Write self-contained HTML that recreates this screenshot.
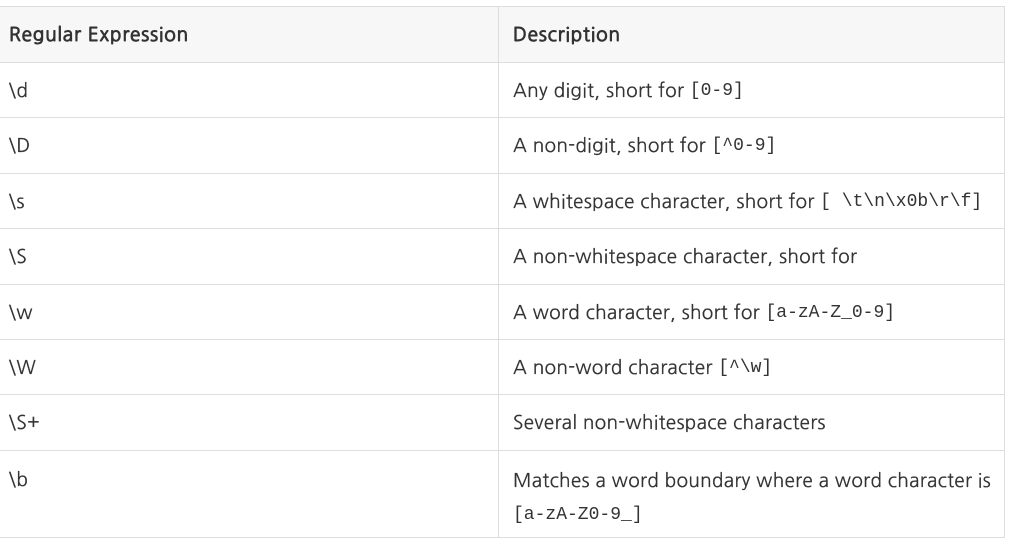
<!DOCTYPE html>
<html><head><meta charset="utf-8"><style>
body{margin:0;background:#fff;width:1010px;height:539px;overflow:hidden;font-family:"NanumGothic","Liberation Sans",sans-serif;color:#333;font-size:19px}
.r{position:absolute;left:0;width:1005px;border-top:1px solid #ddd;}
.c{position:absolute;top:0;bottom:0;display:flex;align-items:center;padding-left:9px;box-sizing:border-box;white-space:pre;-webkit-text-stroke:0.25px #333;letter-spacing:0.3px}
.a{left:0;width:499px;border-right:1px solid #ddd}
.b{left:500px;right:0;padding-left:13px;border-right:1px solid #ddd}
code{font-family:"Liberation Mono","DejaVu Sans Mono",monospace;font-size:18px;-webkit-text-stroke:0;letter-spacing:0}
.h{background:#f7f7f7}
.h .c{-webkit-text-stroke:0.9px #333;letter-spacing:0.8px}
</style></head><body>
<div class="r h" style="top:6px;height:56px"><div class="c a">Regular Expression</div><div class="c b">Description</div></div>
<div class="r" style="top:62px;height:55px"><div class="c a">\d</div><div class="c b">Any digit, short for <code>[0-9]</code></div></div>
<div class="r" style="top:117px;height:56px"><div class="c a">\D</div><div class="c b">A non-digit, short for <code>[^0-9]</code></div></div>
<div class="r" style="top:173px;height:55px"><div class="c a">\s</div><div class="c b">A whitespace character, short for <code>[ \t\n\x0b\r\f]</code></div></div>
<div class="r" style="top:228px;height:56px"><div class="c a">\S</div><div class="c b">A non-whitespace character, short for</div></div>
<div class="r" style="top:284px;height:55px"><div class="c a">\w</div><div class="c b">A word character, short for <code>[a-zA-Z_0-9]</code></div></div>
<div class="r" style="top:339px;height:55px"><div class="c a">\W</div><div class="c b">A non-word character <code>[^\w]</code></div></div>
<div class="r" style="top:394px;height:56px"><div class="c a">\S+</div><div class="c b">Several non-whitespace characters</div></div>
<div class="r" style="top:450px;height:86px;border-bottom:1px solid #ddd"><div class="c a" style="align-items:flex-start;padding-top:17px">\b</div><div class="c b" style="padding-top:14px;line-height:32px;display:block">Matches a word boundary where a word character is<br><code>[a-zA-Z0-9_]</code></div></div>
</body></html>
